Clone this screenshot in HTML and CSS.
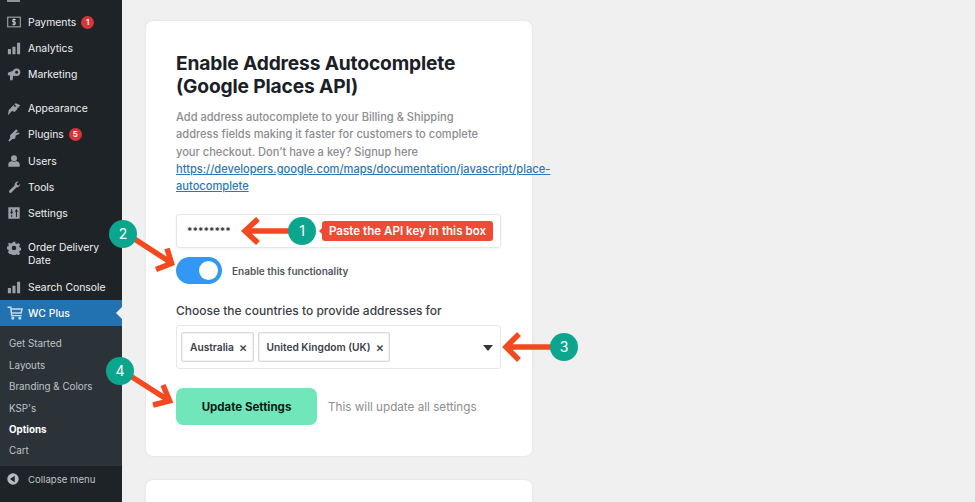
FILE: index.html
```html
<!DOCTYPE html>
<html lang="en">
<head>
<meta charset="utf-8">
<title>Options</title>
<link rel="stylesheet" href="styles.css">
</head>
<body>
<div class="page">
  <nav class="sidebar">
    <div class="stub"></div>
    <div class="menu">
      <a class="item"><svg class="ic" viewBox="0 0 16 16"><rect x=".8" y="2.500" width="14.400" height="11" fill="none" stroke="currentColor" stroke-width="1.300"/><path d="M10 5.200H6.600v2.700h2.800v2.700H6M8 4v8" fill="none" stroke="#fff" stroke-opacity=".75" stroke-width="1.100"/></svg><span>Payments</span><b class="badge">1</b></a>
      <a class="item"><svg class="ic" viewBox="0 0 16 16"><path d="M1 9h3.500v6H1zM6.200 6.500h3.500V15H6.200zM11.500 2H15v13h-3.500z" fill="currentColor"/></svg><span>Analytics</span></a>
      <a class="item"><svg class="ic" viewBox="0 0 16 16"><path d="M1 6.500 9 3.500v7L7 10l-.6 5H3.500L3.400 9.800 1 9.500Z" fill="currentColor"/><circle cx="11" cy="6" r="4.200" fill="currentColor"/><circle cx="11" cy="6" r="1.700" fill="#1d2327"/></svg><span>Marketing</span></a>
      <a class="item gap"><svg class="ic" viewBox="0 0 16 16"><path d="M1 15l1-6 5.500-5.500L9 6l1.500-1.500L8.300 2.600 10 1.500l5.500 2.200-2 1.300.6 1.500-1.800-.5-.8 2.500-3 3-2.500-1.500Z" fill="currentColor"/></svg><span>Appearance</span></a>
      <a class="item"><svg class="ic" viewBox="0 0 16 16"><path d="M10.500 1.500 12.300 3 9.800 6l3.600-1 1 1.700-4.400 2-.8 3.700-3 .3L3 15.500l-1.500-1.300L3.700 11.500l-.2-3.300L7 4.800Z" fill="currentColor"/></svg><span>Plugins</span><b class="badge">5</b></a>
      <a class="item"><svg class="ic" viewBox="0 0 16 16"><circle cx="8" cy="4.800" r="3.400" fill="currentColor"/><path d="M1.500 14.500v-3C1.500 9.500 3.800 8.500 5.400 8c1.500 1 3.700 1 5.200 0 1.600.5 3.900 1.500 3.900 3.500v3Z" fill="currentColor"/></svg><span>Users</span></a>
      <a class="item"><svg class="ic" viewBox="0 0 16 16"><path d="M15 4c.4 2.500-1.500 4.600-4 4.200L4.800 14.700c-1 1-3.400-1.200-2.300-2.400l6.200-6C8.300 3.800 10.500 1.300 13.300 1.700L10.900 4.200l.9 1.900 1.900.3Z" fill="currentColor"/></svg><span>Tools</span></a>
      <a class="item"><svg class="ic" viewBox="0 0 16 16"><path fill-rule="evenodd" d="M1.500 1.500h13v13h-13ZM4.800 3.500v3H3.300l2 3 2-3H5.900v-3ZM10.800 3.500l-2 3h1.400v6h1.200v-6h1.400ZM4.800 10v2.500h1.100V10Z" fill="currentColor"/></svg><span>Settings</span></a>
      <a class="item gap two"><svg class="ic" viewBox="0 0 16 16"><path fill-rule="evenodd" d="M6.600.8h2.800l.4 2 1.400.6 1.800-1.100 2 2-1.100 1.800.6 1.400 2 .4v2.800l-2 .4-.6 1.400 1.100 1.800-2 2-1.800-1.100-1.400.6-.4 2H6.600l-.4-2-1.400-.6L3 14.800l-2-2 1.100-1.800-.6-1.400-2-.4V6.400l2-.4.6-1.400L1 2.800l2-.5 1.800.5 1.400-.6ZM8 5.400a2.600 2.600 0 1 0 0 5.200 2.600 2.600 0 0 0 0-5.200Z" fill="currentColor"/></svg><span>Order Delivery<br>Date</span></a>
      <a class="item"><svg class="ic" viewBox="0 0 16 16"><path d="M1 9h3.500v6H1zM6.200 6.500h3.500V15H6.200zM11.500 2H15v13h-3.500z" fill="currentColor"/></svg><span>Search Console</span></a>
      <a class="item current"><svg class="ic cart" viewBox="0 0 18 16"><path d="M.5 1.500h3.700l1 9.500h11.500M5 8h11l1-4.500H4.500" fill="none" stroke="currentColor" stroke-width="1.700"/><circle cx="6.500" cy="13.800" r="1.800" fill="currentColor"/><circle cx="14.500" cy="13.800" r="1.800" fill="currentColor"/></svg><span>WC Plus</span></a>
    </div>
    <ul class="submenu">
      <li>Get Started</li>
      <li>Layouts</li>
      <li>Branding &amp; Colors</li>
      <li>KSP's</li>
      <li class="on">Options</li>
      <li>Cart</li>
    </ul>
    <a class="collapse"><svg class="ic" viewBox="0 0 16 16"><path fill-rule="evenodd" d="M8 1.500a6.500 6.500 0 1 1 0 13 6.500 6.500 0 0 1 0-13Zm2 2.800L4.500 8l5.500 3.700Z" fill="currentColor"/></svg><span>Collapse menu</span></a>
  </nav>
  <main class="main">
    <section class="card">
      <h1>Enable Address Autocomplete<br>(Google Places API)</h1>
      <p class="desc">Add address autocomplete to your Billing &amp; Shipping<br>address fields making it faster for customers to complete<br>your checkout. Don’t have a key? Signup here<br><a href="#">https://developers.google.com/maps/documentation/javascript/place-<br>autocomplete</a></p>
      <div class="input">********</div>
      <div class="toggle-row"><span class="toggle"><i></i></span><span>Enable this functionality</span></div>
      <h2>Choose the countries to provide addresses for</h2>
      <div class="select">
        <span class="chip">Australia<em>×</em></span>
        <span class="chip">United Kingdom (UK)<em>×</em></span>
        <i class="caret"></i>
      </div>
      <div class="actions"><button type="button">Update Settings</button><span>This will update all settings</span></div>
    </section>
    <section class="card next"></section>
  </main>
</div>
<svg class="arrows" viewBox="0 0 975 502" width="975" height="502">
  <g fill="none" stroke="#f4491f" stroke-width="5.500" stroke-miterlimit="6">
    <path d="M292 231H248M258 219 245 231 258 243"/>
    <path d="M133 238 170 262M167 248.500 171.600 263.300 156 269.500"/>
    <path d="M552 347H510M519 334 506 347 519 360"/>
    <path d="M132 377 168 400M163 385 169.600 400.800 153 405"/>
  </g>
</svg>
<span class="dot d1">1</span>
<span class="dot d2">2</span>
<span class="dot d3">3</span>
<span class="dot d4">4</span>
<span class="tag">Paste the API key in this box</span>
</body>
</html>
```
FILE: styles.css
```css
* { box-sizing: border-box; }
html, body { margin: 0; padding: 0; width: 975px; height: 502px; overflow: hidden; }
body { position: relative; background: #f0f0f0; font-family: Inter, "Liberation Sans", sans-serif; color: #1d2327; }
.page { display: flex; width: 975px; height: 502px; overflow: hidden; }

.sidebar { width: 122px; flex: none; height: 502px; background: #1d2327; display: flex; flex-direction: column; color: #eef0f1; font-size: 10.400px; }
.stub { width: 13px; height: 2px; margin-left: 7px; background: #8f9499; flex: none; }
.menu { padding-top: 7px; }
.item { display: flex; align-items: center; height: 26.200px; padding-left: 7px; }
.item.gap { margin-top: 8px; }
.item.two { height: 39px; margin-top: 8.500px; align-items: flex-start; line-height: 13px; padding-top: 6px; }
.ic { width: 14px; height: 14px; flex: none; margin-right: 7px; color: #9ca1a7; }
.badge { width: 13px; height: 13px; border-radius: 50%; background: #d63638; color: #fff; font-size: 8px; font-weight: 600; text-align: center; line-height: 13px; margin-left: 5px; }
.current { background: #2271b1; color: #fff; font-weight: 500; position: relative; }
.current .ic { color: #c6dbec; }
.current .cart { width: 16px; margin-right: 5px; }
.current::after { content: ""; position: absolute; right: 0; top: 7px; border: 6px solid transparent; border-right-color: #f0f0f0; border-left-width: 0; }
.submenu { list-style: none; margin: 0; padding: 7px 0 4.600px; background: #2c3338; color: #bfc3c7; font-size: 9.800px; }
.submenu li { height: 21.400px; line-height: 21.400px; padding-left: 9px; }
.submenu .on { color: #fff; font-weight: 700; }
.collapse { display: flex; align-items: center; height: 26px; padding-left: 6px; color: #bfc3c7; font-size: 9.600px; }
.collapse .ic { margin-right: 8px; color: #b4b9be; }

.main { flex: 1; padding: 21px 0 0 23.500px; }
.card { width: 386px; height: 435px; background: #fff; border-radius: 7px; padding: 31px 0 0 30.500px; box-shadow: 0 0 3px rgba(0,0,0,.08); }
.card.next { margin-top: 24px; height: 60px; }
h1 { margin: 0; font-size: 19.200px; line-height: 23px; font-weight: 700; color: #1a2026; letter-spacing: -.15px; }
.desc { margin: 11px 0 0; font-size: 11.100px; line-height: 17.300px; font-weight: 500; color: #8b8d90; white-space: nowrap; }
.desc a { color: #2a78b8; }
.input { width: 325px; height: 34px; margin-top: 19px; border: 1px solid #e6e7e8; border-radius: 3px; padding-left: 10px; font-size: 9.800px; font-weight: 700; line-height: 33px; color: #34393f; box-shadow: 0 1px 3px rgba(0,0,0,.05); }
.toggle-row { display: flex; align-items: center; gap: 10px; margin-top: 9px; font-size: 10px; font-weight: 600; color: #50555b; }
.toggle { width: 46px; height: 27px; border-radius: 14px; background: #3298f3; padding: 4px 4px 4px 23px; }
.toggle i { display: block; width: 19px; height: 19px; border-radius: 50%; background: #fff; }
h2 { margin: 19px 0 0; font-size: 12px; line-height: 16px; font-weight: 500; color: #3a3f45; }
.select { position: relative; display: flex; align-items: center; gap: 4px; width: 325px; height: 44px; margin-top: 6px; padding-left: 4px; border: 1px solid #e6e7e8; border-radius: 3px; }
.chip { display: flex; align-items: center; height: 30px; padding: 0 5px 0 8px; gap: 5px; border: 1px solid #d6d8da; border-radius: 2px; box-shadow: inset 0 0 0 1px #f2f2f2; font-size: 10.200px; font-weight: 600; color: #3a4046; }
.chip em { font-style: normal; font-size: 13px; font-weight: 500; line-height: 13px; }
.caret { position: absolute; right: 7px; top: 19px; border: 5px solid transparent; border-top: 6px solid #31363b; border-bottom-width: 0; }
.actions { display: flex; align-items: center; gap: 11px; margin-top: 19px; font-size: 11.700px; color: #8e8e8e; }
button { width: 141px; height: 37px; border: 0; border-radius: 7px; background: #72e6bb; font-family: inherit; font-size: 11.500px; font-weight: 700; color: #0c1a14; padding: 0; }

.arrows { position: absolute; left: 0; top: 0; pointer-events: none; }
.dot { position: absolute; width: 28px; height: 28px; border-radius: 50%; background: #0ca68f; color: #fff; font-size: 14px; line-height: 28px; text-align: center; }
.d1 { left: 288px; top: 217px; }
.d2 { left: 109px; top: 220px; }
.d3 { left: 550px; top: 333px; }
.d4 { left: 106px; top: 357px; }
.tag { position: absolute; left: 322px; top: 221px; height: 20px; width: 171px; border-radius: 3px; background: #ee4b36; color: #fff; font-size: 11.600px; font-weight: 600; line-height: 20px; text-align: center; }
.tag::before { content: ""; position: absolute; left: -3px; top: 7px; border: 3px solid transparent; border-right-color: #ee4b36; border-left-width: 0; }
```
